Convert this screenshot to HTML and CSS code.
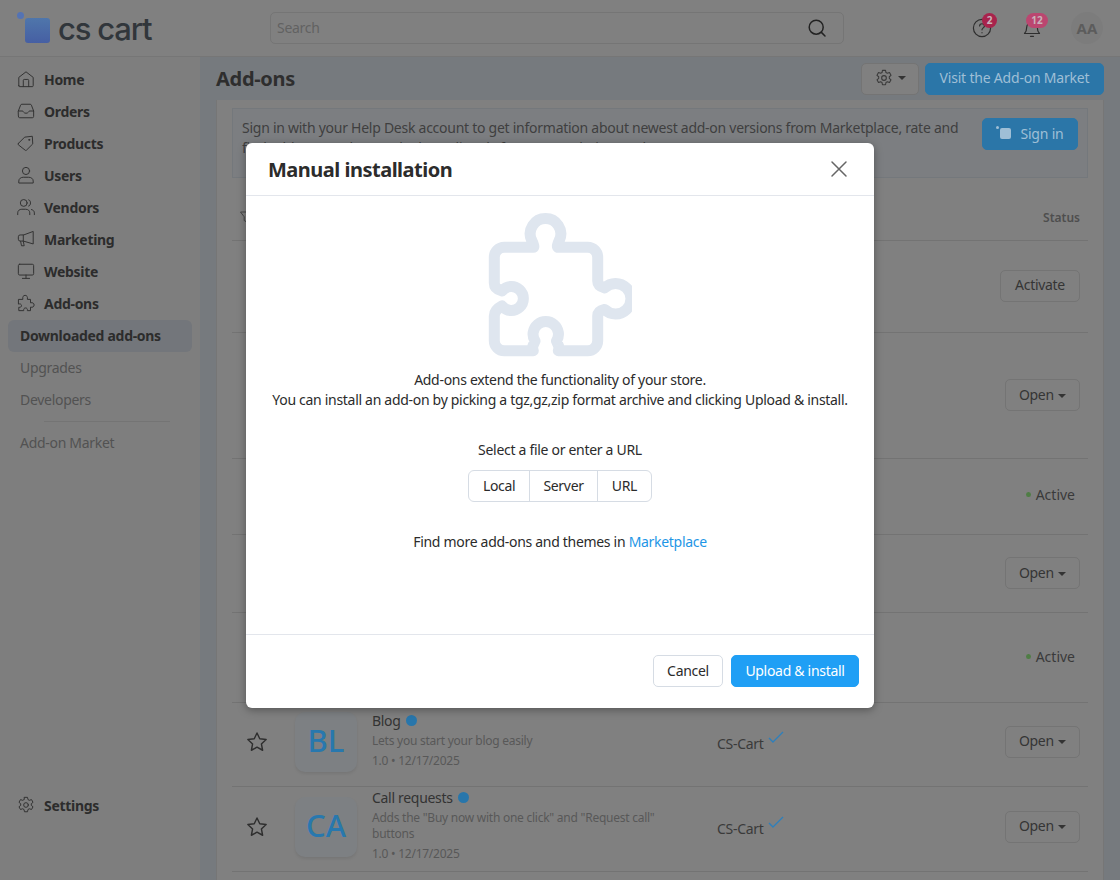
FILE: index.html
```html
<!DOCTYPE html>
<html>
  <head>
    <meta charset="utf-8">
    <title>Add-ons</title>
    <link rel="stylesheet" href="styles.css">
  </head>
  <body>
    <header class="topbar">
      <div class="logo">
        <span class="logo-mark"><i class="logo-dot"></i><i class="logo-square"></i></span>
        <span class="logo-text">cs cart</span>
      </div>
      <div class="search">
        <span>Search</span>
        <svg width="20" height="20" viewBox="0 0 20 20" fill="none" stroke="#222" stroke-width="1.5" stroke-linecap="round"><circle cx="9.2" cy="9.2" r="7"/><path d="M14.4 14.4 18 18"/></svg>
      </div>
      <div class="top-icons">
        <span class="top-icon">
          <svg width="20" height="20" viewBox="0 0 20 20" fill="none" stroke="#2e2e2e" stroke-width="1.2" stroke-linecap="round"><circle cx="10" cy="10" r="8.6"/><path d="M7.6 8c0-3 4.8-3 4.8 0 0 1.8-2.4 1.9-2.4 3.8"/><path d="M10 14.6v.2"/></svg>
          <b class="badge badge-dark">2</b>
        </span>
        <span class="top-icon">
          <svg width="20" height="20" viewBox="0 0 20 20" fill="none" stroke="#2e2e2e" stroke-width="1.2" stroke-linecap="round" stroke-linejoin="round"><path d="M2.5 15.5c1.5-1.5 2.2-3 2.2-6.200a5.300 5.300 0 0 1 10.600 0c0 3.200.7 4.700 2.200 6.200z"/><path d="M8.500 18.300h3"/></svg>
          <b class="badge badge-pink">12</b>
        </span>
        <span class="avatar">AA</span>
      </div>
    </header>

    <div class="layout">
      <nav class="sidebar">
        <a class="nav-item">
          <svg class="nav-icon" viewBox="0 0 20 20"><path d="M2 17.500V8.200L10 2l8 6.200v9.300a1 1 0 0 1-1 1H3a1 1 0 0 1-1-1z"/><path d="M7 18.500v-7a1 1 0 0 1 1-1h4a1 1 0 0 1 1 1v7"/></svg>
          Home
        </a>
        <a class="nav-item">
          <svg class="nav-icon" viewBox="0 0 20 20"><path d="M1.500 10 4 3.500a1.500 1.500 0 0 1 1.400-1h9.200a1.500 1.500 0 0 1 1.400 1l2.500 6.500v6a1.500 1.500 0 0 1-1.500 1.500H3A1.500 1.500 0 0 1 1.500 16z"/><path d="M1.500 10H6c1 0 1.200 2.500 4 2.500S13 10 14 10h4.500"/></svg>
          Orders
        </a>
        <a class="nav-item">
          <svg class="nav-icon" viewBox="0 0 20 20"><path d="M1.500 10.500 8.500 3.500 17 2.500l.5 8.500-7 7a1 1 0 0 1-1.400 0l-7.600-6a1 1 0 0 1 0-1.500z"/><circle cx="13.500" cy="6.500" r=".6"/></svg>
          Products
        </a>
        <a class="nav-item">
          <svg class="nav-icon" viewBox="0 0 20 20"><circle cx="10" cy="5.500" r="4"/><path d="M2 18.500v-1.800c0-2.700 2.500-4.200 5-4.200h6c2.500 0 5 1.500 5 4.200v1.800z"/></svg>
          Users
        </a>
        <a class="nav-item">
          <svg class="nav-icon" viewBox="0 0 20 20"><circle cx="7.500" cy="5.500" r="3.800"/><path d="M.8 18.500v-2c0-2.500 2-4 4.500-4h4.400c2.500 0 4.500 1.500 4.500 4v2"/><path d="M13 2c2.800.3 2.800 6.700 0 7"/><path d="M16 12.800c2 .5 3.300 1.800 3.300 3.700v2"/></svg>
          Vendors
        </a>
        <a class="nav-item">
          <svg class="nav-icon" viewBox="0 0 20 20"><path d="M18 2v13.500L7 12.300H3.500a2 2 0 0 1-2-2V7.500a2 2 0 0 1 2-2H7z"/><path d="M7 5.500v6.800"/><path d="M4 12.500l1 5h3l-1-5"/></svg>
          Marketing
        </a>
        <a class="nav-item">
          <svg class="nav-icon" viewBox="0 0 20 20"><rect x="1.500" y="2.500" width="17" height="12" rx="1.500"/><path d="M10 14.500v3.500M6 18.200h8"/></svg>
          Website
        </a>
        <a class="nav-item">
          <svg class="nav-icon" viewBox="0 0 20 20"><path d="M2 6h4.500C6 3 7 1.500 9 1.500S12 3 11.500 6H15v3.800c2.500-.6 4 .5 4 2.400s-1.500 3-4 2.400v3.900h-3.500c.4-2-.6-3-2-3s-2.400 1-2 3H2v-3.800c1.600.4 3-.3 3-1.800s-1.400-2.300-3-1.800z"/></svg>
          Add-ons
        </a>
        <a class="nav-sub nav-active">Downloaded add-ons</a>
        <a class="nav-sub">Upgrades</a>
        <a class="nav-sub">Developers</a>
        <div class="nav-divider"></div>
        <a class="nav-sub">Add-on Market</a>
        <a class="nav-item nav-settings">
          <svg class="nav-icon" viewBox="0 0 20 20"><path d="M8.300 1.500h3.400l.5 2.500 1.500.8 2.400-.8 1.700 3-1.900 1.600v1.800l1.900 1.600-1.700 3-2.400-.8-1.500.8-.5 2.500H8.300l-.5-2.500-1.500-.8-2.400.8-1.700-3 1.900-1.600V8.600L2.200 7l1.700-3 2.400.8 1.500-.8z"/><circle cx="10" cy="10" r="2.600"/></svg>
          Settings
        </a>
      </nav>

      <main class="content">
        <div class="page-head">
          <h1>Add-ons</h1>
          <button class="btn btn-gear">
            <svg width="18" height="18" viewBox="0 0 20 20" fill="none" stroke="#3a3a3a" stroke-width="1.200" stroke-linejoin="round"><path d="M8.300 1.500h3.400l.5 2.500 1.500.8 2.400-.8 1.700 3-1.900 1.600v1.800l1.900 1.600-1.700 3-2.400-.8-1.500.8-.5 2.500H8.300l-.5-2.500-1.500-.8-2.400.8-1.700-3 1.900-1.600V8.600L2.200 7l1.700-3 2.400.8 1.500-.8z"/><circle cx="10" cy="10" r="2.600"/></svg>
            <i class="caret"></i>
          </button>
          <button class="btn btn-blue">Visit the Add-on Market</button>
        </div>

        <section class="panel">
          <div class="notice">
            <p>Sign in with your Help Desk account to get information about newest add-on versions from Marketplace, rate and find add-ons, and upgrade them directly from your admin panel.</p>
            <button class="btn btn-blue btn-signin"><span class="signin-mark"><i></i><i></i></span>Sign in</button>
          </div>

          <div class="table-head">
            <svg width="11" height="12" viewBox="0 0 11 12" fill="none" stroke="#444" stroke-width="1"><path d="M.5 1h10L6.800 5.800V11L4.200 9.500V5.800z"/></svg>
            <span>Status</span>
          </div>

          <div class="row row-1"><div class="row-end"><button class="btn btn-plain btn-activate">Activate</button></div></div>
          <div class="row row-2"><div class="row-end"><button class="btn btn-plain">Open <i class="caret"></i></button></div></div>
          <div class="row row-3"><div class="row-end status"><i class="dot"></i>Active</div></div>
          <div class="row row-4"><div class="row-end"><button class="btn btn-plain">Open <i class="caret"></i></button></div></div>
          <div class="row row-5"><div class="row-end status"><i class="dot"></i>Active</div></div>

          <div class="row row-6 row-full">
            <svg class="star" viewBox="0 0 20 20"><path d="m10 1.800 2.500 5.300 5.800.7-4.300 4 1.100 5.700-5.100-2.800-5.100 2.800 1.100-5.700-4.300-4 5.800-.7z"/></svg>
            <div class="tile">BL</div>
            <div class="info">
              <div class="name">Blog <i class="info-dot"></i></div>
              <div class="desc">Lets you start your blog easily</div>
              <div class="desc">1.0 • 12/17/2025</div>
            </div>
            <div class="dev">CS-Cart
              <svg class="check" viewBox="0 0 16 12"><path d="M1 7l4 4 10-10"/></svg>
            </div>
            <div class="row-end"><button class="btn btn-plain">Open <i class="caret"></i></button></div>
          </div>

          <div class="row row-7 row-full">
            <svg class="star" viewBox="0 0 20 20"><path d="m10 1.800 2.500 5.300 5.800.7-4.300 4 1.100 5.700-5.100-2.800-5.100 2.800 1.100-5.700-4.300-4 5.800-.7z"/></svg>
            <div class="tile">CA</div>
            <div class="info">
              <div class="name">Call requests <i class="info-dot"></i></div>
              <div class="desc">Adds the "Buy now with one click" and "Request call" buttons</div>
              <div class="desc">1.0 • 12/17/2025</div>
            </div>
            <div class="dev">CS-Cart
              <svg class="check" viewBox="0 0 16 12"><path d="M1 7l4 4 10-10"/></svg>
            </div>
            <div class="row-end"><button class="btn btn-plain">Open <i class="caret"></i></button></div>
          </div>
        </section>
      </main>
    </div>

    <!-- dialog -->
    <div class="modal">
      <div class="modal-head">
        <h2>Manual installation</h2>
        <svg class="modal-close" width="18" height="18" viewBox="0 0 18 18" fill="none" stroke="#666" stroke-width="1.500" stroke-linecap="round"><path d="M2 2l14 14M16 2 2 16"/></svg>
      </div>
      <div class="modal-body">
        <svg class="puzzle" width="144" height="144" viewBox="0 0 144 144" fill="none" stroke="#dfe6ef" stroke-width="11" stroke-linejoin="round"><path d="M16.300 34.300H45.300Q47 34.300 43.500 27A15.300 15.300 0 1 1 71.500 27Q68 34.300 70.300 34.300H99.700A10 10 0 0 1 109.700 44.300V68Q109.700 73 116.700 75A15.300 15.300 0 1 1 116.700 96.400Q109.700 98 109.700 103V127.700A10 10 0 0 1 99.700 137.700H70.300Q73 137.700 68.500 128A12.700 12.700 0 1 0 47 128Q42.500 137.700 45.300 137.700H16.300A10 10 0 0 1 6.300 127.700V103Q6.300 97 14 93A12 12 0 1 0 14 78Q6.300 76 6.300 70V44.300A10 10 0 0 1 16.300 34.300Z"/></svg>
        <p class="modal-text">Add-ons extend the functionality of your store.<br>You can install an add-on by picking a tgz,gz,zip format archive and clicking Upload &amp; install.</p>
        <p class="modal-select">Select a file or enter a URL</p>
        <div class="btn-group">
          <span>Local</span><span>Server</span><span>URL</span>
        </div>
        <p class="modal-find">Find more add-ons and themes in <a>Marketplace</a></p>
      </div>
      <div class="modal-foot">
        <button class="btn btn-cancel">Cancel</button>
        <button class="btn btn-upload">Upload &amp; install</button>
      </div>
    </div>
  </body>
</html>
```

FILE: styles.css
```css
* {
  box-sizing: border-box;
}
html, body {
  height: 880px;
}
body {
  margin: 0;
  overflow: hidden;
  background-color: #767a7e;
  color: #2b2b2b;
  font-family: "Noto Sans", "Open Sans", sans-serif;
  font-size: 14px;
  letter-spacing: -0.3px;
}
p, h1, h2 {
  margin: 0;
}
i {
  font-style: normal;
}

/* top bar */
.topbar {
  height: 57px;
  display: flex;
  align-items: center;
  background-color: #808080;
  border-bottom: solid #767676 1px;
}
.logo {
  width: 270px;
  display: flex;
  align-items: center;
  padding-left: 17px;
}
.logo-mark {
  position: relative;
  width: 33px;
  height: 33px;
  margin-right: 8px;
}
.logo-dot {
  position: absolute;
  left: 0;
  top: 0;
  width: 7px;
  height: 7px;
  border-radius: 50%;
  background-color: #5473b4;
}
.logo-square {
  position: absolute;
  left: 8px;
  top: 6px;
  width: 25px;
  height: 25px;
  border-radius: 3px;
  background: linear-gradient(#4f76ab, #465fa3);
}
.logo-text {
  font-family: "Inter", "Liberation Sans", sans-serif;
  font-size: 31px;
  font-weight: 500;
  letter-spacing: -1.2px;
  color: #31363b;
  line-height: 1;
}
.search {
  width: 574px;
  height: 32px;
  display: flex;
  align-items: center;
  justify-content: space-between;
  padding: 0 16px 1px 6px;
  color: #626262;
  border: solid #757575 1px;
  border-radius: 5px;
}
.top-icons {
  flex: 1;
  display: flex;
  align-items: center;
  padding-left: 128px;
}
.top-icon {
  position: relative;
  width: 20px;
  height: 20px;
  margin-right: 30px;
}
.badge {
  position: absolute;
  top: -5px;
  left: 10px;
  min-width: 15px;
  height: 15px;
  padding: 0 3px;
  border-radius: 8px;
  font-size: 10px;
  line-height: 15px;
  font-weight: 700;
  letter-spacing: 0;
  text-align: center;
  color: #c9b3bb;
}
.badge-dark {
  background-color: #a8234c;
}
.badge-pink {
  left: 4px;
  width: 22px;
  background-color: #bb4670;
}
.avatar {
  width: 32px;
  height: 32px;
  margin-left: -1px;
  border-radius: 50%;
  background-color: #7c7c7c;
  color: #5c5c5c;
  font-weight: 700;
  font-size: 15px;
  letter-spacing: 0;
  line-height: 32px;
  text-align: center;
}

.layout {
  height: 823px;
  display: flex;
}

/* sidebar */
.sidebar {
  width: 200px;
  flex: none;
  display: flex;
  flex-direction: column;
  padding: 7px 8px 58px;
  background-color: #7e7e7e;
}
.nav-item {
  height: 32px;
  display: flex;
  align-items: center;
  gap: 9px;
  padding: 0 0 2px 9px;
  font-weight: 700;
  color: #2c2c2c;
}
.nav-icon {
  width: 18px;
  height: 18px;
  flex: none;
  fill: none;
  stroke: #333;
  stroke-width: 1.1;
  stroke-linejoin: round;
  stroke-linecap: round;
}
.nav-sub {
  height: 32px;
  padding-left: 12px;
  line-height: 32px;
  color: #525252;
}
.nav-active {
  border-radius: 6px;
  background-color: #73767b;
  font-weight: 700;
  color: #2c2c2c;
}
.nav-divider {
  margin: 5px 22px 5px 36px;
  border-top: solid #747474 1px;
}
.nav-settings {
  margin-top: auto;
}

/* content */
.content {
  flex: 1;
  padding: 0 16px;
}
.page-head {
  height: 43px;
  display: flex;
  align-items: center;
  gap: 6px;
}
.page-head h1 {
  flex: 1;
  font-size: 20px;
  font-weight: 700;
  color: #2e2e2e;
}
.btn {
  height: 32px;
  padding: 0 0 2px;
  font-family: inherit;
  font-size: 14px;
  letter-spacing: inherit;
  border-radius: 5px;
  border: solid #747474 1px;
  background-color: #808080;
  color: #2b2b2b;
}
.btn-gear {
  width: 58px;
  display: flex;
  align-items: center;
  justify-content: center;
  gap: 4px;
}
.btn-blue {
  width: 179px;
  background-color: #2b76a8;
  border-color: #2b76a8;
  color: #9fbfd6;
  letter-spacing: -0.2px;
}
.caret {
  display: inline-block;
  margin-left: 1px;
  vertical-align: middle;
  border-top: 4px solid #333;
  border-left: 4px solid transparent;
  border-right: 4px solid transparent;
}
.panel {
  height: 780px;
  padding: 8px 15px 0 15px;
  background-color: #808080;
  border-right: solid #767676 1px;
  border-left: solid #767676 1px;
}
.notice {
  height: 70px;
  display: flex;
  justify-content: space-between;
  padding: 9px 9px 0 9px;
  background-color: #7c7e81;
  border: solid #74787c 1px;
  color: #3f3f3f;
  letter-spacing: -0.26px;
  line-height: 20px;
}
.notice p {
  width: 730px;
}
.btn-signin {
  width: 96px;
  flex: none;
  display: flex;
  align-items: center;
  justify-content: center;
  gap: 9px;
}
.signin-mark {
  position: relative;
  width: 15px;
  height: 14px;
}
.signin-mark i {
  position: absolute;
  background-color: #9fbfd6;
}
.signin-mark i:first-child {
  left: 0;
  top: 0;
  width: 3px;
  height: 3px;
  border-radius: 50%;
}
.signin-mark i:last-child {
  left: 4px;
  top: 2px;
  width: 11px;
  height: 11px;
  border-radius: 2px;
}
.table-head {
  height: 63px;
  display: flex;
  align-items: center;
  justify-content: space-between;
  padding: 16px 8px 0 8px;
  border-bottom: solid #737373 1px;
  font-size: 12px;
  font-weight: 600;
  letter-spacing: 0;
  color: #4e4e4e;
}
.row {
  display: flex;
  align-items: center;
  padding-bottom: 2px;
  border-bottom: solid #737373 1px;
}
.row-1 { height: 92px; }
.row-2 { height: 126px; padding-bottom: 1px; }
.row-3 { height: 76px; padding-bottom: 4px; }
.row-4 { height: 78px; padding-bottom: 1px; }
.row-5 { height: 90px; }
.row-6 { height: 84px; padding-bottom: 6px; }
.row-7 { height: 85px; padding-bottom: 5px; }
.row-end {
  margin-left: auto;
  padding-right: 8px;
}
.row .btn {
  width: 75px;
}
.row .btn-activate {
  width: 80px;
}
.btn-plain {
  color: #353535;
}
.status {
  width: 62px;
  padding-right: 13px;
  display: flex;
  align-items: center;
  gap: 5px;
  color: #3a3a3a;
  letter-spacing: 0;
}
.dot {
  width: 5px;
  height: 5px;
  border-radius: 50%;
  background-color: #4f7d45;
}
.star {
  width: 22px;
  height: 22px;
  margin-left: 14px;
  flex: none;
  fill: none;
  stroke: #2e2e2e;
  stroke-width: 1.3;
  stroke-linejoin: round;
}
.tile {
  width: 62px;
  height: 60px;
  margin-left: 27px;
  flex: none;
  border-radius: 10px;
  background-color: #7d8083;
  box-shadow: 0 2px 3px rgba(0, 0, 0, 0.08);
  color: #2878ae;
  font-size: 31px;
  font-weight: 500;
  letter-spacing: 0;
  line-height: 56px;
  text-align: center;
}
.info {
  width: 300px;
  margin: 0 0 4px 15px;
  flex: none;
}
.name {
  display: flex;
  align-items: center;
  gap: 5px;
  color: #333;
  line-height: 20px;
}
.info-dot {
  width: 11px;
  height: 11px;
  border-radius: 50%;
  background-color: #2876ab;
}
.desc {
  margin-top: 2px;
  font-size: 12px;
  letter-spacing: -0.25px;
  line-height: 16px;
  color: #585858;
}
.desc + .desc {
  margin-top: 4px;
}
.dev {
  display: flex;
  margin-left: 45px;
  color: #3a3a3a;
  padding-top: 3px;
}
.check {
  width: 16px;
  height: 12px;
  margin-left: 5px;
  margin-top: -3px;
  fill: none;
  stroke: #2f7fba;
  stroke-width: 1.4;
}

/* dialog */
.modal {
  position: absolute;
  left: 246px;
  top: 143px;
  width: 628px;
  height: 565px;
  display: flex;
  flex-direction: column;
  background-color: #fff;
  border-radius: 6px;
  box-shadow: 0 2px 8px rgba(0, 0, 0, 0.35);
}
.modal-head {
  height: 53px;
  display: flex;
  align-items: center;
  justify-content: space-between;
  padding: 0 26px 0 22px;
  border-bottom: solid #e3e6ec 1px;
}
.modal-head h2 {
  font-size: 20px;
  font-weight: 700;
  letter-spacing: -0.5px;
  color: #2c2c2c;
}
.modal-body {
  flex: 1;
  display: flex;
  flex-direction: column;
  align-items: center;
  padding-top: 17px;
  line-height: 20px;
  color: #2b2b2b;
}
.modal-text {
  margin-top: 13px;
  text-align: center;
}
.modal-select {
  margin-top: 30px;
}
.btn-group {
  display: flex;
  height: 32px;
  margin-top: 10px;
  border: solid #d6dce4 1px;
  border-radius: 6px;
}
.btn-group span {
  padding: 0 13.5px;
  line-height: 30px;
  border-left: solid #d6dce4 1px;
}
.btn-group span:first-child {
  border-left: 0;
}
.modal-find {
  margin-top: 30px;
}
.modal-find a {
  color: #1e96e6;
}
.modal-foot {
  height: 74px;
  display: flex;
  justify-content: flex-end;
  gap: 8px;
  padding: 20px 15px 0 0;
  border-top: solid #e3e6ec 1px;
}
.btn-cancel {
  width: 70px;
  background-color: #fff;
  border-color: #d6dce4;
}
.btn-upload {
  width: 128px;
  background-color: #1f9ff5;
  border-color: #1f9ff5;
  color: #fff;
}
```
